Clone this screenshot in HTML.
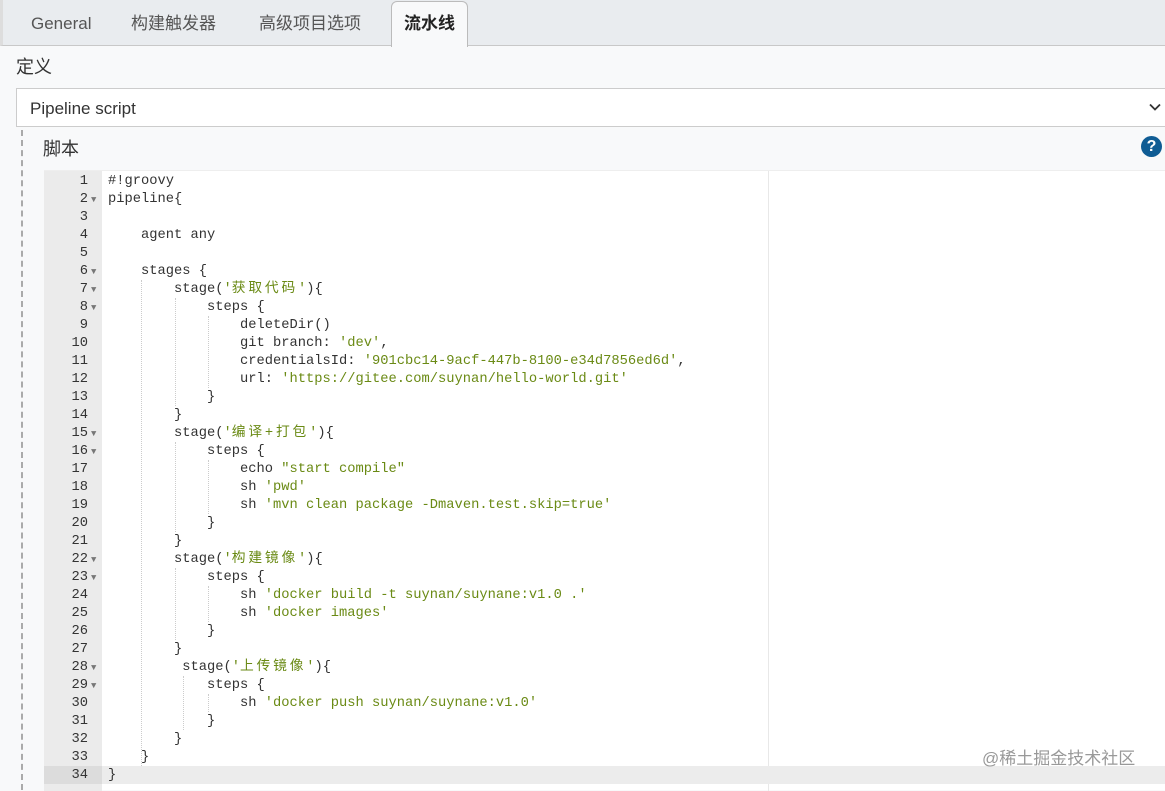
<!DOCTYPE html>
<html><head><meta charset="utf-8"><style>
*{margin:0;padding:0;box-sizing:border-box}
body{width:1165px;height:787px;overflow:hidden;background:#f8f9fa;font-family:"Liberation Sans","Noto Sans CJK SC",sans-serif;position:relative;color:#333}
.tabs{position:absolute;left:0;top:0;width:1165px;height:46px;background:#e9ecef;border-bottom:1px solid #c8c8c8;border-left:3px solid #ddd}
.tab{position:absolute;top:13px;font-size:17px;line-height:22px;height:22px;color:#555}
.tab.act{top:1px;height:46px;background:#f8f9fa;border:1px solid #bbb;border-bottom:none;border-radius:6px 6px 0 0;padding:11px 12px 0;color:#222;font-weight:bold}
.lbl{position:absolute;font-size:18px;line-height:22px;color:#333}
.sel{position:absolute;left:16px;top:88px;width:1160px;height:39px;background:#fff;border:1px solid #ccc;font-size:17px;line-height:20px;padding:10px 13px;color:#333}
.dash{position:absolute;left:21px;top:130px;height:660px;border-left:2px dashed #aaa}
.help{position:absolute;left:1141px;top:136px;width:21px;height:21px;border-radius:50%;background:#0f5c94;color:#fff;font-weight:bold;font-size:16px;text-align:center;line-height:21px}
.ed{position:absolute;left:44px;top:170px;width:1121px;height:620px;background:#fff;border-top:1px solid #eee}
.gut{position:absolute;left:0;top:0;width:58px;height:620px;background:#ebebeb}
.pm{position:absolute;left:724px;top:0;height:620px;border-left:1px solid #e8e8e8}
.active{position:absolute;left:0;top:595px;width:1121px;height:18px;background:#ececec}
.active .g{position:absolute;left:0;top:0;width:58px;height:18px;background:#dcdcdc}
pre{position:absolute;top:2px;font-family:"Liberation Mono","Noto Sans CJK SC",monospace;font-size:13.75px;line-height:18px}
.ln{left:0;width:44px;text-align:right;color:#333}
.ar{left:47px;color:#777;font-size:9px}
.code{left:64px;color:#333}
.s{color:#6a8a14}
.c{letter-spacing:2.8px}
.ig{position:absolute;border-left:1px dotted #ccc;width:0}
.wm{position:absolute;left:982px;top:744px;font-size:17px;color:#999}
</style></head><body>
<div class="tabs">
<span class="tab" style="left:28px">General</span>
<span class="tab" style="left:128px">构建触发器</span>
<span class="tab" style="left:256px">高级项目选项</span>
<span class="tab act" style="left:388px">流水线</span>
</div>
<div class="lbl" style="left:16px;top:56px">定义</div>
<div class="sel">Pipeline script<svg style="position:absolute;right:14px;top:14px" width="12" height="8" viewBox="0 0 12 8"><path d="M1 1.5L6 6.5L11 1.5" fill="none" stroke="#333" stroke-width="1.8"/></svg></div>
<div class="dash"></div>
<div class="lbl" style="left:43px;top:138px">脚本</div>
<div class="help">?</div>
<div class="ed">
<div class="gut"></div>
<div class="pm"></div>
<div class="active"><div class="g"></div></div>
<div class="ig" style="left:97px;top:109px;height:486px"></div>
<div class="ig" style="left:131px;top:127px;height:108px"></div>
<div class="ig" style="left:131px;top:271px;height:90px"></div>
<div class="ig" style="left:131px;top:397px;height:72px"></div>
<div class="ig" style="left:139px;top:505px;height:54px"></div>
<div class="ig" style="left:164px;top:145px;height:72px"></div>
<div class="ig" style="left:164px;top:289px;height:54px"></div>
<div class="ig" style="left:164px;top:415px;height:36px"></div>
<div class="ig" style="left:164px;top:523px;height:18px"></div>
<pre class="ln">1
2
3
4
5
6
7
8
9
10
11
12
13
14
15
16
17
18
19
20
21
22
23
24
25
26
27
28
29
30
31
32
33
34</pre>
<pre class="ar">&nbsp;
▼
&nbsp;
&nbsp;
&nbsp;
▼
▼
▼
&nbsp;
&nbsp;
&nbsp;
&nbsp;
&nbsp;
&nbsp;
▼
▼
&nbsp;
&nbsp;
&nbsp;
&nbsp;
&nbsp;
▼
▼
&nbsp;
&nbsp;
&nbsp;
&nbsp;
▼
▼</pre>
<pre class="code">#!groovy
pipeline{

    agent any

    stages {
        stage(<span class="s">'<span class="c">获取代码</span>'</span>){
            steps {
                deleteDir()
                git branch: <span class="s">'dev'</span>,
                credentialsId: <span class="s">'901cbc14-9acf-447b-8100-e34d7856ed6d'</span>,
                url: <span class="s">'https://gitee.com/suynan/hello-world.git'</span>
            }
        }
        stage(<span class="s">'<span class="c">编译+打包</span>'</span>){
            steps {
                echo <span class="s">"start compile"</span>
                sh <span class="s">'pwd'</span>
                sh <span class="s">'mvn clean package -Dmaven.test.skip=true'</span>
            }
        }
        stage(<span class="s">'<span class="c">构建镜像</span>'</span>){
            steps {
                sh <span class="s">'docker build -t suynan/suynane:v1.0 .'</span>
                sh <span class="s">'docker images'</span>
            }
        }
         stage(<span class="s">'<span class="c">上传镜像</span>'</span>){
            steps {
                sh <span class="s">'docker push suynan/suynane:v1.0'</span>
            }
        }
    }
}</pre>
</div>
<div class="wm">@稀土掘金技术社区</div>
</body></html>
